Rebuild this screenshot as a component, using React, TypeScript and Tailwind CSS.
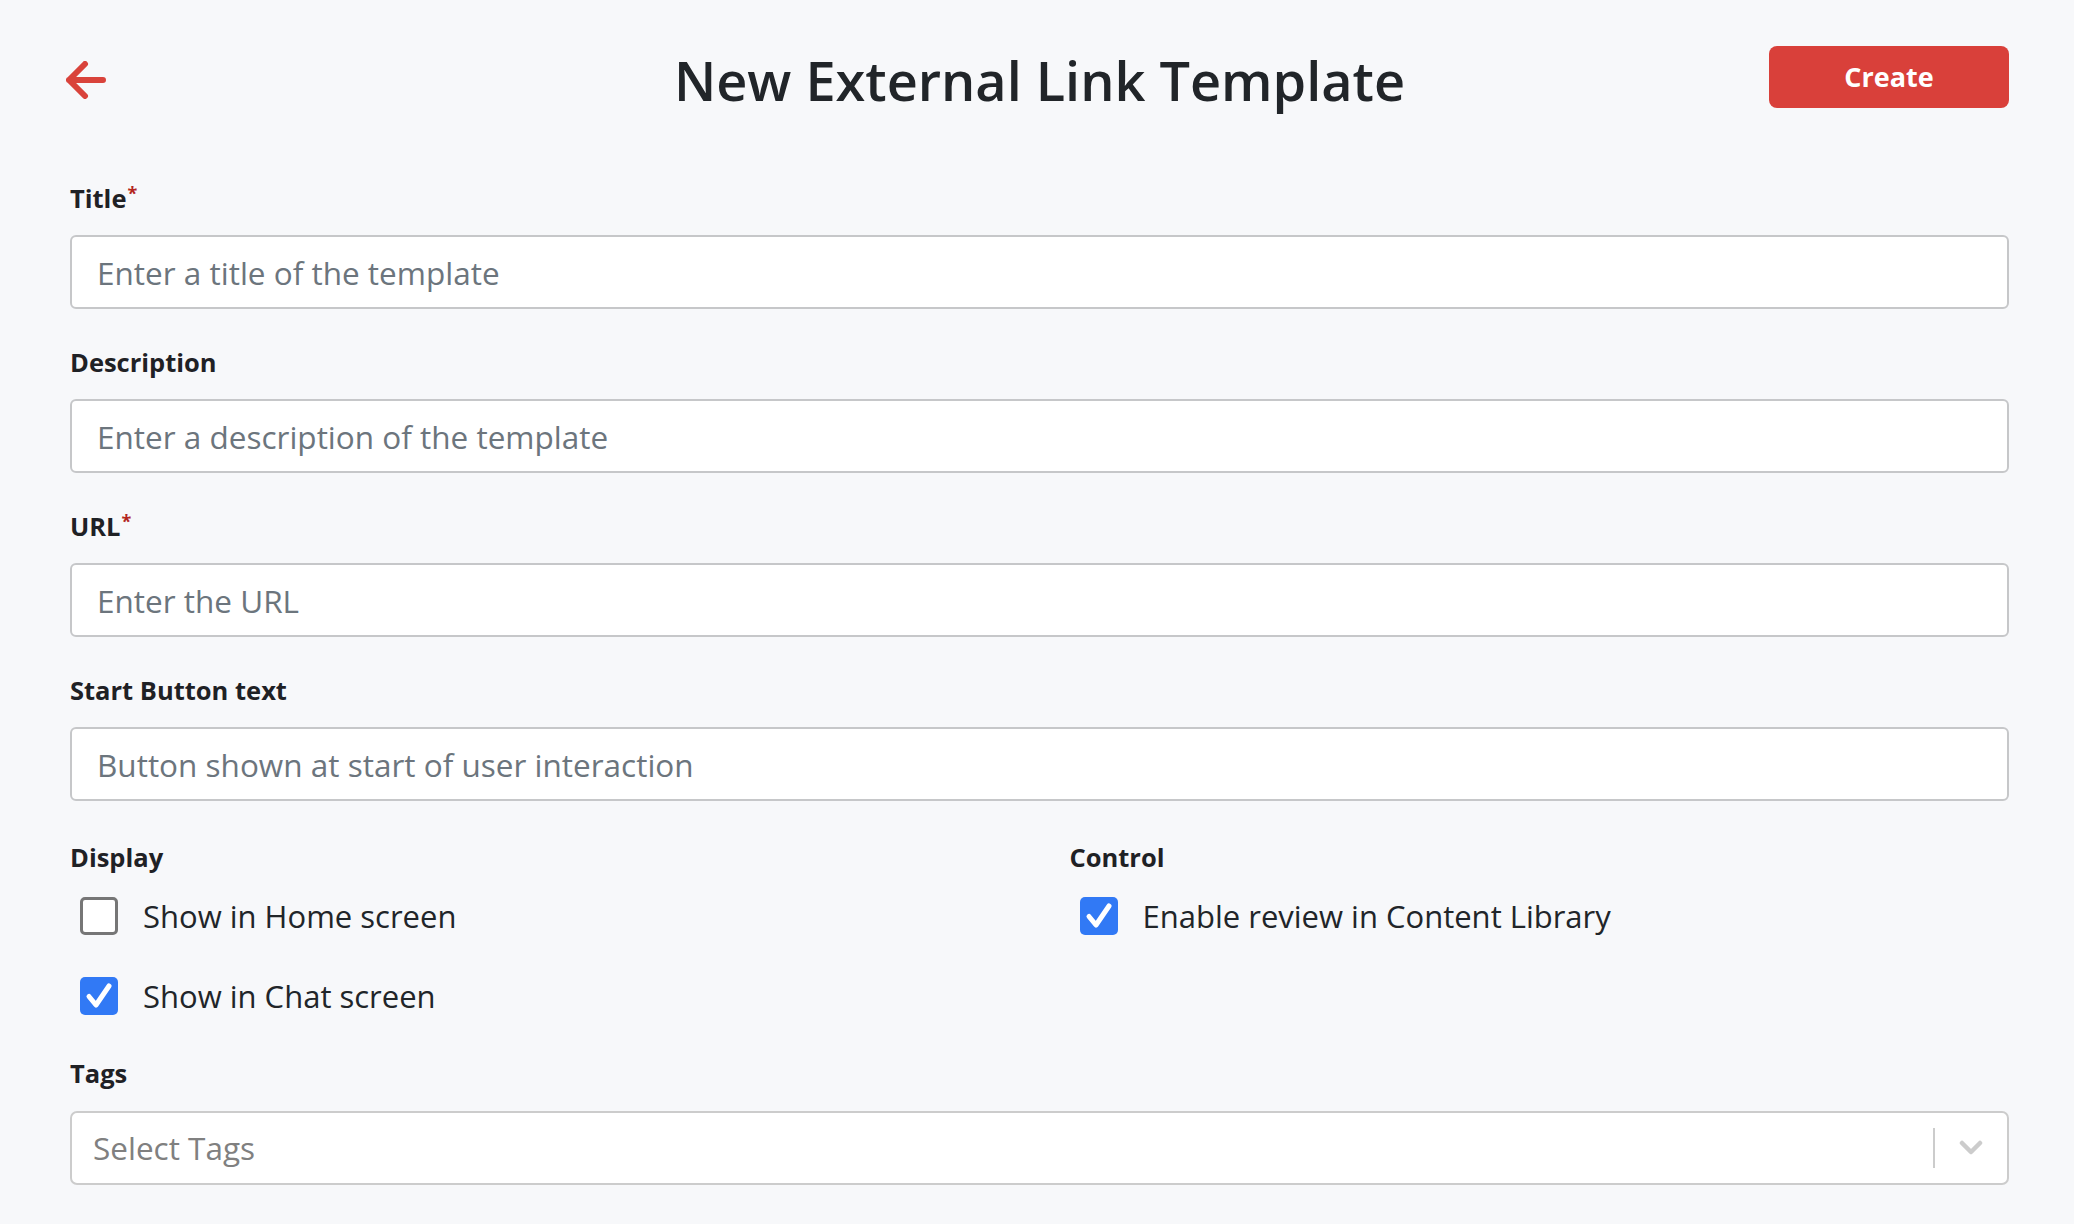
import React from "react";

interface FieldProps {
  label: string;
  required?: boolean;
  placeholder: string;
}

function Field({ label, required, placeholder }: FieldProps) {
  return (
    <div className="flex flex-col">
      <label className="mb-[21px] h-[32px] text-[25.5px] leading-[32px] font-bold text-[#1f2125]">
        {label}
        {required && (
          <span className="relative top-[2px] ml-[1px] align-top text-[18px] leading-none text-[#b3261e]">
            *
          </span>
        )}
      </label>
      <input
        type="text"
        placeholder={placeholder}
        className="h-[74px] w-full rounded-[6px] border-2 border-[#c6c7c9] bg-white px-[25px] text-[31.5px] text-[#212529] outline-none placeholder:text-[#6c757d]"
      />
    </div>
  );
}

function CheckRow({ label, checked }: { label: string; checked?: boolean }) {
  return (
    <div className="ml-[10px] flex h-[38px] items-center gap-[25px]">
      {checked ? (
        <span className="flex h-[38px] w-[38px] items-center justify-center rounded-[5px] bg-[#3179f5]">
          <svg width="38" height="38" viewBox="0 0 38 38" aria-hidden="true">
            <path
              d="M9 19.5 L16 28 L29 9"
              fill="none"
              stroke="#fff"
              strokeWidth={5}
              strokeLinecap="round"
              strokeLinejoin="round"
            />
          </svg>
        </span>
      ) : (
        <span className="h-[38px] w-[38px] rounded-[5px] border-[3px] border-[#767676] bg-white" />
      )}
      <span className="text-[31px] leading-[38px] text-[#212529]">{label}</span>
    </div>
  );
}

export default function App() {
  return (
    <div className="min-h-screen bg-[#f7f8fa] pt-[46px] pr-[65px] pb-[40px] pl-[70px] font-['Open_Sans',sans-serif]">
      {/* header */}
      <div className="grid h-[62px] grid-cols-[1fr_auto_1fr] items-center">
        <div>
          <svg
            className="-ml-[4px] mt-[6px]"
            width="40"
            height="38"
            viewBox="0 0 40 38"
            aria-hidden="true"
          >
            <path
              d="M19 3 L3 19 L19 35 M3 19 L37 19"
              fill="none"
              stroke="#d9433b"
              strokeWidth={6}
              strokeLinecap="round"
              strokeLinejoin="round"
            />
          </svg>
        </div>
        <h1 className="mt-[6px] text-[54px] leading-[56px] font-semibold text-[#212529]">
          New External Link Template
        </h1>
        <div className="flex justify-end">
          <button className="h-[62px] w-[240px] rounded-[8px] bg-[#d9403a] text-[27px] font-bold text-white">
            Create
          </button>
        </div>
      </div>

      <div className="mt-[74px] flex flex-col gap-[37px]">
        <Field label="Title" required placeholder="Enter a title of the template" />
        <Field label="Description" placeholder="Enter a description of the template" />
        <Field label="URL" required placeholder="Enter the URL" />
        <Field label="Start Button text" placeholder="Button shown at start of user interaction" />
      </div>

      <div className="mt-[40px] grid grid-cols-2 gap-x-[60px]">
        <div className="flex flex-col">
          <div className="text-[25.5px] leading-[32px] font-bold text-[#1f2125]">Display</div>
          <div className="mt-[24px] flex flex-col gap-[42px]">
            <CheckRow label="Show in Home screen" />
            <CheckRow label="Show in Chat screen" checked />
          </div>
        </div>
        <div className="flex flex-col">
          <div className="text-[25.5px] leading-[32px] font-bold text-[#1f2125]">Control</div>
          <div className="mt-[24px] flex flex-col gap-[42px]">
            <CheckRow label="Enable review in Content Library" checked />
          </div>
        </div>
      </div>

      <div className="mt-[42px] flex flex-col">
        <div className="mb-[22px] text-[25.5px] leading-[32px] font-bold text-[#1f2125]">Tags</div>
        <div className="flex h-[74px] w-full items-center rounded-[7px] border-2 border-[#cccccc] bg-white pr-[24px] pl-[21px]">
          <span className="flex-1 text-[31.5px] text-[#808080]">Select Tags</span>
          <span className="h-[40px] w-[2px] bg-[#cccccc]" />
          <svg className="ml-[24px]" width="24" height="16" viewBox="0 0 24 16" aria-hidden="true">
            <path
              d="M3 3 L12 12 L21 3"
              fill="none"
              stroke="#cccccc"
              strokeWidth={4.5}
              strokeLinecap="round"
              strokeLinejoin="round"
            />
          </svg>
        </div>
      </div>
    </div>
  );
}
